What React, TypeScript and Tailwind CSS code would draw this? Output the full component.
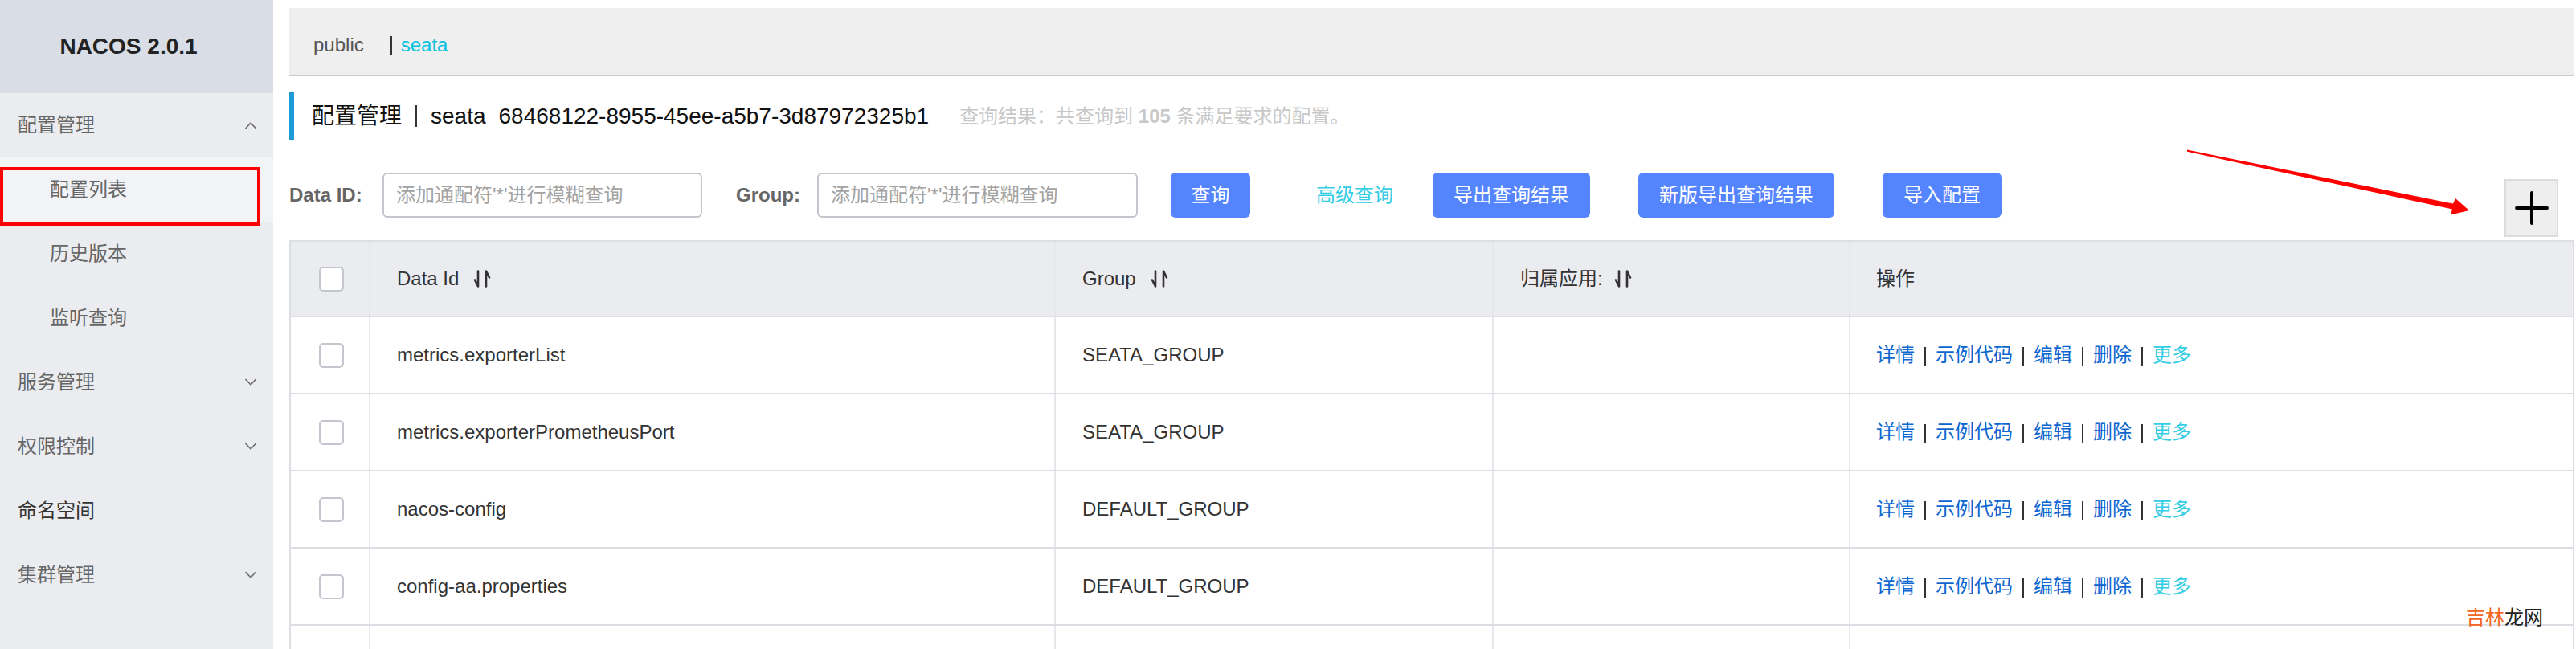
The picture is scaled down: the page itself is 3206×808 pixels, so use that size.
import React from "react";

const FONT = "font-['Liberation_Sans','Noto_Sans_CJK_SC',sans-serif]";

const menu = [
  { label: "配置管理", sub: false, chevron: "up", active: false, dark: false },
  { label: "配置列表", sub: true, chevron: "", active: true, dark: false },
  { label: "历史版本", sub: true, chevron: "", active: false, dark: false },
  { label: "监听查询", sub: true, chevron: "", active: false, dark: false },
  { label: "服务管理", sub: false, chevron: "down", active: false, dark: false },
  { label: "权限控制", sub: false, chevron: "down", active: false, dark: false },
  { label: "命名空间", sub: false, chevron: "", active: false, dark: true },
  { label: "集群管理", sub: false, chevron: "down", active: false, dark: false },
];

// last row is cut off by the window, so it shows no text
const rows = [
  { id: "metrics.exporterList", group: "SEATA_GROUP", ops: true },
  { id: "metrics.exporterPrometheusPort", group: "SEATA_GROUP", ops: true },
  { id: "nacos-config", group: "DEFAULT_GROUP", ops: true },
  { id: "config-aa.properties", group: "DEFAULT_GROUP", ops: true },
  { id: "", group: "", ops: false },
];

function Chevron({ up }: { up?: boolean }) {
  return (
    <svg width="16" height="10" viewBox="0 0 16 10" fill="none" stroke="#666" strokeWidth="1.5">
      <path d={up ? "M1.5 9 L8 2 L14.5 9" : "M1.5 1 L8 8 L14.5 1"} />
    </svg>
  );
}

function SortIcon({ className = "ml-[18px]" }: { className?: string }) {
  return (
    <svg width="22" height="22" viewBox="0 0 22 22" fill="none" stroke="#333" strokeWidth="2.6" strokeLinecap="round" strokeLinejoin="round" className={className}>
      <path d="M6 1.5 V20.5 L2 12.5" />
      <path d="M16 20.5 V1.5 L20 9.5" />
    </svg>
  );
}

function Checkbox() {
  return <div className="w-[31px] h-[31px] rounded-[5px] border-2 border-[#c4c6cf] bg-white" />;
}

function Sep({ h = "h-[24px]" }: { h?: string }) {
  return <div className={`w-[2px] ${h} bg-[#333]`} />;
}

function Sidebar() {
  return (
    <aside className="relative w-[340px] h-[808px] shrink-0 bg-[#ebecf0]">
      <div className="h-[116px] bg-[#d9dde5] flex items-center justify-center pr-[20px]">
        <span className="text-[28px] font-bold text-[#222]">NACOS 2.0.1</span>
      </div>
      {menu.map((m) => (
        <div
          key={m.label}
          className={`h-[80px] flex items-center justify-between pr-[20px] text-[24px] ${
            m.sub ? "pl-[62px]" : "pl-[22px]"
          } ${m.active ? "bg-[#f2f3f6]" : ""} ${m.dark ? "text-[#333]" : "text-[#666]"}`}
        >
          <span>{m.label}</span>
          {m.chevron === "up" && <Chevron up />}
          {m.chevron === "down" && <Chevron />}
        </div>
      ))}
      {/* annotation box */}
      <div className="absolute left-0 top-[208px] w-[324px] h-[73px] border-4 border-[#ff0000]" />
    </aside>
  );
}

function Button({ label, w }: { label: string; w: string }) {
  return (
    <div className={`${w} h-[56px] rounded-[6px] bg-[#5485ff] text-white text-[24px] flex items-center justify-center`}>
      {label}
    </div>
  );
}

function FilterRow() {
  return (
    <div className="mt-[41px] flex items-start">
      <div className="w-[116px] h-[56px] flex items-center text-[24px] font-bold text-[#666]">Data ID:</div>
      <div className="w-[398px] h-[56px] rounded-[6px] border-2 border-[#c4c6cf] flex items-center pl-[15px] text-[24px] text-[#a3a3a3]">
        添加通配符'*'进行模糊查询
      </div>
      <div className="ml-[42px] w-[101px] h-[56px] flex items-center text-[24px] font-bold text-[#666]">Group:</div>
      <div className="w-[399px] h-[56px] rounded-[6px] border-2 border-[#c4c6cf] flex items-center pl-[15px] text-[24px] text-[#a3a3a3]">
        添加通配符'*'进行模糊查询
      </div>
      <div className="ml-[41px]">
        <Button label="查询" w="w-[99px]" />
      </div>
      <div className="ml-[82px] h-[56px] flex items-center text-[24px] text-[#33cde5]">高级查询</div>
      <div className="ml-[49px]">
        <Button label="导出查询结果" w="w-[196px]" />
      </div>
      <div className="ml-[60px]">
        <Button label="新版导出查询结果" w="w-[244px]" />
      </div>
      <div className="ml-[60px]">
        <Button label="导入配置" w="w-[148px]" />
      </div>
      <div className="ml-auto mr-[20px] mt-[8px] w-[67px] h-[72px] border-2 border-[#dcdcdc] bg-[#eeeeee] flex items-center justify-center">
        <svg width="42" height="42" viewBox="0 0 42 42" fill="none" stroke="#000" strokeWidth="4" strokeLinecap="round">
          <path d="M21 2 V40" />
          <path d="M2 21 H40" />
        </svg>
      </div>
    </div>
  );
}

const COLS = "grid grid-cols-[99px_853px_545px_444px_1fr]";
const CELL = "border-r-2 border-[#e6e7eb] flex items-center pl-[33px]";

function Ops() {
  const links = ["详情", "示例代码", "编辑", "删除"];
  return (
    <div className="flex items-center text-[24px]">
      {links.map((l) => (
        <React.Fragment key={l}>
          <span className="text-[#0d66d0]">{l}</span>
          <div className="mx-[12px] mt-[4px]">
            <Sep />
          </div>
        </React.Fragment>
      ))}
      <span className="text-[#33cde5]">更多</span>
    </div>
  );
}

function Table() {
  return (
    <div className="mt-[4px] border-t-2 border-l-2 border-r-2 border-[#dcdee3] text-[24px] text-[#333]">
      <div className={`${COLS} h-[94px] bg-[#ebecf0] border-b-2 border-[#dcdee3]`}>
        <div className="border-r-2 border-[#e6e7eb] flex items-center justify-center pl-[4px]">
          <Checkbox />
        </div>
        <div className={CELL}>
          <span>Data Id</span>
          <SortIcon />
        </div>
        <div className={CELL}>
          <span>Group</span>
          <SortIcon />
        </div>
        <div className={CELL}>
          <span>归属应用:</span>
          <SortIcon className="ml-[14px]" />
        </div>
        <div className="flex items-center pl-[32px]">操作</div>
      </div>
      {rows.map((r, i) => (
        <div key={i} className={`${COLS} h-[96px] bg-white border-b-2 border-[#dcdee3]`}>
          <div className="border-r-2 border-[#e6e7eb] flex items-center justify-center pl-[4px]">
            <Checkbox />
          </div>
          <div className={CELL}>{r.id}</div>
          <div className={CELL}>{r.group}</div>
          <div className={CELL} />
          <div className="flex items-center pl-[32px]">{r.ops && <Ops />}</div>
        </div>
      ))}
    </div>
  );
}

export default function App() {
  return (
    <div className={`relative w-[3206px] h-[808px] overflow-hidden flex bg-white ${FONT}`}>
      <Sidebar />

      <main className="flex-1 pl-[20px] pt-[10px] pr-[2px]">
        {/* namespace bar */}
        <div className="h-[85px] bg-[#efefef] border-b-2 border-[#cccccc] flex items-center pl-[30px] pt-[8px] text-[24px]">
          <span className="text-[#555]">public</span>
          <div className="ml-[33px] mt-[2px]">
            <Sep h="h-[24px]" />
          </div>
          <span className="ml-[11px] text-[#00c1de]">seata</span>
        </div>

        {/* title */}
        <div className="mt-[20px] h-[59px] border-l-[6px] border-[#1a9bd7] flex items-center pl-[22px]">
          <span className="text-[28px] text-[#111]">配置管理</span>
          <div className="mx-[17px]">
            <Sep h="h-[27px]" />
          </div>
          <span className="text-[28px] text-[#111]">seata</span>
          <span className="ml-[16px] text-[28px] text-[#111]">68468122-8955-45ee-a5b7-3d87972325b1</span>
          <span className="ml-[38px] text-[24px] text-[#c8c8c8]">
            查询结果：共查询到 <b>105</b> 条满足要求的配置。
          </span>
        </div>

        <FilterRow />
        <Table />
      </main>

      {/* red annotation arrow */}
      <svg className="absolute left-[2700px] top-[170px]" width="400" height="110" viewBox="0 0 400 110">
        <polygon points="22,16.5 353,83.5 356,77 373,92 350,97.5 352,90.5 22,18.8" fill="#ff0000" />
      </svg>

      {/* watermark */}
      <div className="absolute right-[41px] top-[757px] text-[24px] leading-none">
        <span className="text-[#f26522]">吉林</span>
        <span className="text-[#222]">龙网</span>
      </div>
    </div>
  );
}
